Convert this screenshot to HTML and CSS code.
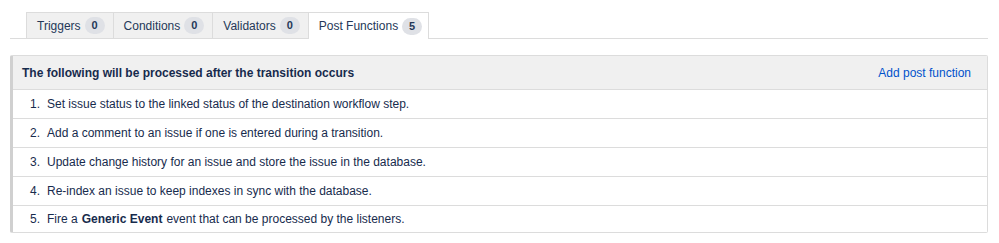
FILE: index.html
```html
<!DOCTYPE html>
<html lang="en">
<head>
    <meta charset="UTF-8">
    <title>Transition - Post Functions</title>
    <link rel="stylesheet" href="styles.css">
</head>
<body>
<div class="page">
    <ul class="tabs">
        <li class="tab">Triggers <span class="badge">0</span></li>
        <li class="tab">Conditions <span class="badge">0</span></li>
        <li class="tab">Validators <span class="badge">0</span></li>
        <li class="tab active">Post Functions <span class="badge">5</span></li>
    </ul>

    <div class="panel">
        <div class="panel-head">
            <h2>The following will be processed after the transition occurs</h2>
            <a href="#" class="add-link">Add post function</a>
        </div>
        <ol class="steps">
            <li>Set issue status to the linked status of the destination workflow step.</li>
            <li>Add a comment to an issue if one is entered during a transition.</li>
            <li>Update change history for an issue and store the issue in the database.</li>
            <li>Re-index an issue to keep indexes in sync with the database.</li>
            <li>Fire a <b>Generic Event</b> event that can be processed by the listeners.</li>
        </ol>
    </div>
</div>
</body>
</html>
```

FILE: styles.css
```css
body {
    margin: 0;
    font-family: "Liberation Sans", Arial, sans-serif;
    font-size: 12px;
    color: #172b4d;
    background-color: #fff;
}
.page {
    padding: 12px 11px 0 10px;
}
.tabs {
    display: flex;
    list-style: none;
    margin: 0;
    padding: 0 0 0 16px;
    border-bottom: 1px solid #dcdcdc;
}
.tab {
    display: flex;
    align-items: center;
    gap: 4px;
    height: 25px;
    padding: 0 8px 0 10px;
    background-color: #f0f0f0;
    border: 1px solid #dcdcdc;
    border-bottom: none;
    border-right: none;
    margin-bottom: -1px;
    color: #253858;
}
.tab:last-child {
    border-right: 1px solid #dcdcdc;
}
.tab.active {
    background-color: #fff;
    height: 26px;
    padding-right: 6px;
}
.badge {
    display: inline-block;
    min-width: 8px;
    padding: 1px 6px;
    border-radius: 9px;
    background-color: #dfe1e6;
    font-size: 11px;
    font-weight: bold;
    line-height: 15px;
    text-align: center;
    color: #253858;
}
.panel {
    margin-top: 16px;
    border: 1px solid #dcdcdc;
    border-left: 3px solid #d0d0d0;
    border-radius: 2px;
}
.panel-head {
    display: flex;
    justify-content: space-between;
    align-items: center;
    height: 33px;
    padding: 0 16px 0 9px;
    background-color: #f0f0f0;
    border-bottom: 1px solid #dcdcdc;
}
.panel-head h2 {
    margin: 0;
    font-size: 12px;
    font-weight: bold;
    color: #172b4d;
}
.add-link {
    color: #0052cc;
    text-decoration: none;
}
.steps {
    margin: 0;
    padding: 0;
    list-style: none;
    counter-reset: step;
}
.steps li {
    display: flex;
    align-items: center;
    height: 28px;
    border-bottom: 1px solid #dcdcdc;
    counter-increment: step;
}
.steps li::before {
    content: counter(step) ".";
    width: 16px;
    margin-left: 17px;
    margin-right: 1px;
}
.steps li b {
    margin: 0 4px;
}
.steps li:last-child {
    border-bottom: none;
    height: 26px;
}
```
